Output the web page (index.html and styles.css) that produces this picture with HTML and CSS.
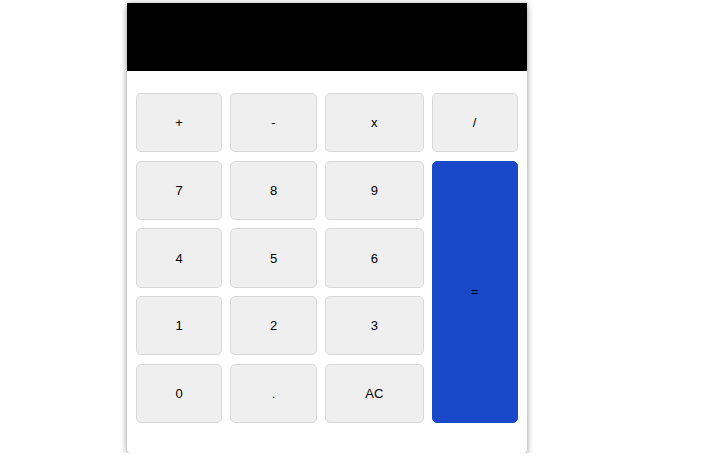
FILE: index.html
```html
<!DOCTYPE html>
<html>
<head>
<meta charset="utf-8">
<link rel="stylesheet" href="styles.css">
</head>
<body>
<div class="calc">
  <div class="display"></div>
  <div class="keys">
    <button class="key">+</button>
    <button class="key">-</button>
    <button class="key">x</button>
    <button class="key">/</button>
    <button class="key">7</button>
    <button class="key">8</button>
    <button class="key">9</button>
    <button class="key equals">=</button>
    <button class="key">4</button>
    <button class="key">5</button>
    <button class="key">6</button>
    <button class="key">1</button>
    <button class="key">2</button>
    <button class="key">3</button>
    <button class="key">0</button>
    <button class="key">.</button>
    <button class="key">AC</button>
  </div>
</div>
</body>
</html>
```
FILE: styles.css
```css
html, body {
  margin: 0;
  padding: 0;
  background: #ffffff;
  font-family: "Liberation Sans", Arial, sans-serif;
}
body {
  padding: 3px 0 0 127px;
}
.calc {
  width: 400px;
  height: 450px;
  box-sizing: border-box;
  background: #ffffff;
  border-radius: 4px;
  box-shadow: 0 1px 6px rgba(0, 0, 0, 0.45);
}
.display {
  height: 68px;
  background: #000000;
}
.keys {
  display: grid;
  grid-template-columns: 86px 87px 98.5px 86px;
  grid-auto-rows: 59.3px;
  column-gap: 8px;
  row-gap: 8.4px;
  padding: 22px 9px 0 9px;
}
.key {
  margin: 0;
  padding: 0;
  background: #efefef;
  border: 1px solid #d8d8d8;
  border-radius: 5px;
  font-family: "Liberation Sans", Arial, sans-serif;
  font-size: 13px;
  color: #000000;
}
.equals {
  grid-column: 4;
  grid-row: 2 / span 4;
  background: #1948c8;
  border-color: #1948c8;
}
```
